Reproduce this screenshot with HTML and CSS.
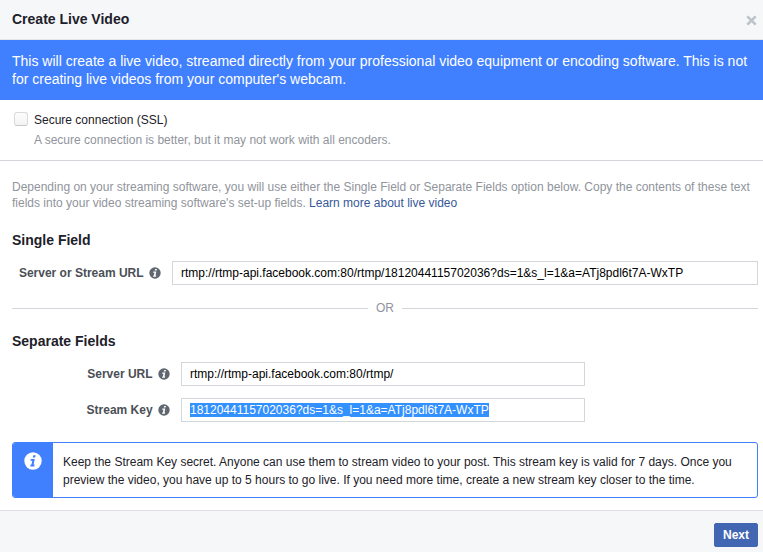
FILE: index.html
```html
<!DOCTYPE html>
<html lang="en">
<head>
<meta charset="utf-8">
<title>Create Live Video</title>
<link rel="stylesheet" href="styles.css">
</head>
<body>
<div class="dialog">
  <header class="header">
    <h1>Create Live Video</h1>
    <svg class="close" viewBox="0 0 10 10"><path d="M1.200 1.200l7.600 7.600M8.800 1.200l-7.600 7.600"/></svg>
  </header>
  <p class="banner">This will create a live video, streamed directly from your professional video equipment or encoding software. This is not for creating live videos from your computer's webcam.</p>
  <section class="secure">
    <span class="checkbox"></span>
    <div><div class="secure-label">Secure connection (SSL)</div><p class="secure-note">A secure connection is better, but it may not work with all encoders.</p></div>
  </section>
  <main class="content">
    <p class="intro">Depending on your streaming software, you will use either the Single Field or Separate Fields option below. Copy the contents of these text fields into your video streaming software's set-up fields. <a>Learn more about live video</a></p>
    <h2>Single Field</h2>
    <div class="row row-single">
      <span class="label">Server or Stream URL</span>
      <svg class="info" viewBox="0 0 12 12"><circle cx="6" cy="6" r="5.7"/><path d="M6.200 1.900h1.800l-.5 1.700H5.700zM4.400 4.400h2.900L6.500 8.400h.7l-.3 1.300H4l.3-1.300h.6l.5-2.700H4.200z"/></svg>
      <div class="field">rtmp://rtmp-api.facebook.com:80/rtmp/1812044115702036?ds=1&amp;s_l=1&amp;a=ATj8pdl6t7A-WxTP</div>
    </div>
    <div class="or">OR</div>
    <h2>Separate Fields</h2>
    <div class="row">
      <span class="label">Server URL</span>
      <svg class="info" viewBox="0 0 12 12"><circle cx="6" cy="6" r="5.7"/><path d="M6.200 1.900h1.800l-.5 1.700H5.700zM4.400 4.400h2.900L6.500 8.400h.7l-.3 1.300H4l.3-1.300h.6l.5-2.700H4.200z"/></svg>
      <div class="field">rtmp://rtmp-api.facebook.com:80/rtmp/</div>
    </div>
    <div class="row">
      <span class="label">Stream Key</span>
      <svg class="info" viewBox="0 0 12 12"><circle cx="6" cy="6" r="5.7"/><path d="M6.200 1.900h1.800l-.5 1.700H5.700zM4.400 4.400h2.900L6.500 8.400h.7l-.3 1.300H4l.3-1.300h.6l.5-2.700H4.200z"/></svg>
      <div class="field"><span class="selected">1812044115702036?ds=1&amp;s_l=1&amp;a=ATj8pdl6t7A-WxTP</span></div>
    </div>
    <div class="notice">
      <div class="notice-side"><svg class="notice-icon" viewBox="0 0 12 12"><circle cx="6" cy="6" r="5.8"/><path d="M6.200 2.100h1.600l-.4 1.500H5.800zM4.500 4.600h2.700L6.400 8.400h.7l-.3 1.200H4.200l.2-1.200h.6l.5-2.600H4.300z"/></svg></div>
      <p>Keep the Stream Key secret. Anyone can use them to stream video to your post. This stream key is valid for 7 days. Once you preview the video, you have up to 5 hours to go live. If you need more time, create a new stream key closer to the time.</p>
    </div>
  </main>
  <footer class="footer"><button>Next</button></footer>
</div>
</body>
</html>
```
FILE: styles.css
```css
* { box-sizing: border-box; }
body { margin: 0; background: #fff; color: #1d2129; font: 12px/16px "Liberation Sans", Arial, sans-serif; }
h1, h2, p { margin: 0; }
.dialog { width: 763px; height: 552px; display: flex; flex-direction: column; overflow: hidden; }
.header { height: 40px; flex: none; display: flex; align-items: center; justify-content: space-between; padding: 0 6px 2px 12px; background: #f6f7f9; border-bottom: 1px solid #e5e5e5; }
h1, h2 { font-size: 14px; line-height: 18px; font-weight: bold; }
.close { width: 11px; height: 11px; margin-top: 3px; stroke: #bec2c9; stroke-width: 2.4; fill: none; }
.banner { height: 60px; flex: none; padding: 12px 12px; background: #4080ff; color: #fff; font-size: 14px; line-height: 18px; }
.secure { height: 61px; flex: none; display: flex; gap: 6px; padding: 12px 14px; border-bottom: 1px solid #d3d6db; }
.checkbox { width: 14px; height: 14px; border: 1px solid #dadada; border-bottom-color: #c8c8c8; border-radius: 3px; background: linear-gradient(#fdfdfd, #f3f3f3); }
.secure-note { margin-top: 4px; color: #90949c; }
.content { flex: 1; padding: 18px 5px 0 12px; }
.intro { color: #90949c; margin-bottom: 20px; }
.intro a { color: #365899; }
.row { display: flex; align-items: center; margin-top: 12px; }
.label { width: 140.6px; text-align: right; color: #4b4f56; font-weight: bold; }
.row-single .label { width: 131.6px; }
.info { width: 12px; height: 12px; margin: 0 11.4px 0 5px; fill: #606770; }
.info path { fill: #fff; }
.field { width: 404px; height: 24px; border: 1px solid #d3d6db; padding: 3px 8px; color: #000; }
.row-single .field { width: 586px; }
.or { display: flex; align-items: center; gap: 8px; margin: 15px 0 16px; color: #90949c; }
.or::before, .or::after { content: ""; flex: 1; height: 1px; background: #d3d6db; }
.selected { background: #3390ff; color: #fff; }
.notice { display: flex; height: 56px; margin-top: 20px; border: 1px solid #4080ff; border-radius: 3px; overflow: hidden; }
.notice-side { width: 40px; flex: none; background: #4080ff; padding: 9px 0 0 11px; }
.notice-icon { width: 18px; height: 18px; fill: #fff; }
.notice-icon path { fill: #4080ff; }
.notice p { padding: 10px 10px; line-height: 18px; }
.footer { height: 42px; flex: none; display: flex; justify-content: flex-end; padding: 12px 5px 0 0; background: #f6f7f9; border-top: 1px solid #dddfe2; }
button { width: 44px; height: 24px; padding: 0; border: 1px solid #4267b2; border-radius: 2px; background: #4267b2; color: #fff; font: bold 12px/20px "Liberation Sans", Arial, sans-serif; }
```
